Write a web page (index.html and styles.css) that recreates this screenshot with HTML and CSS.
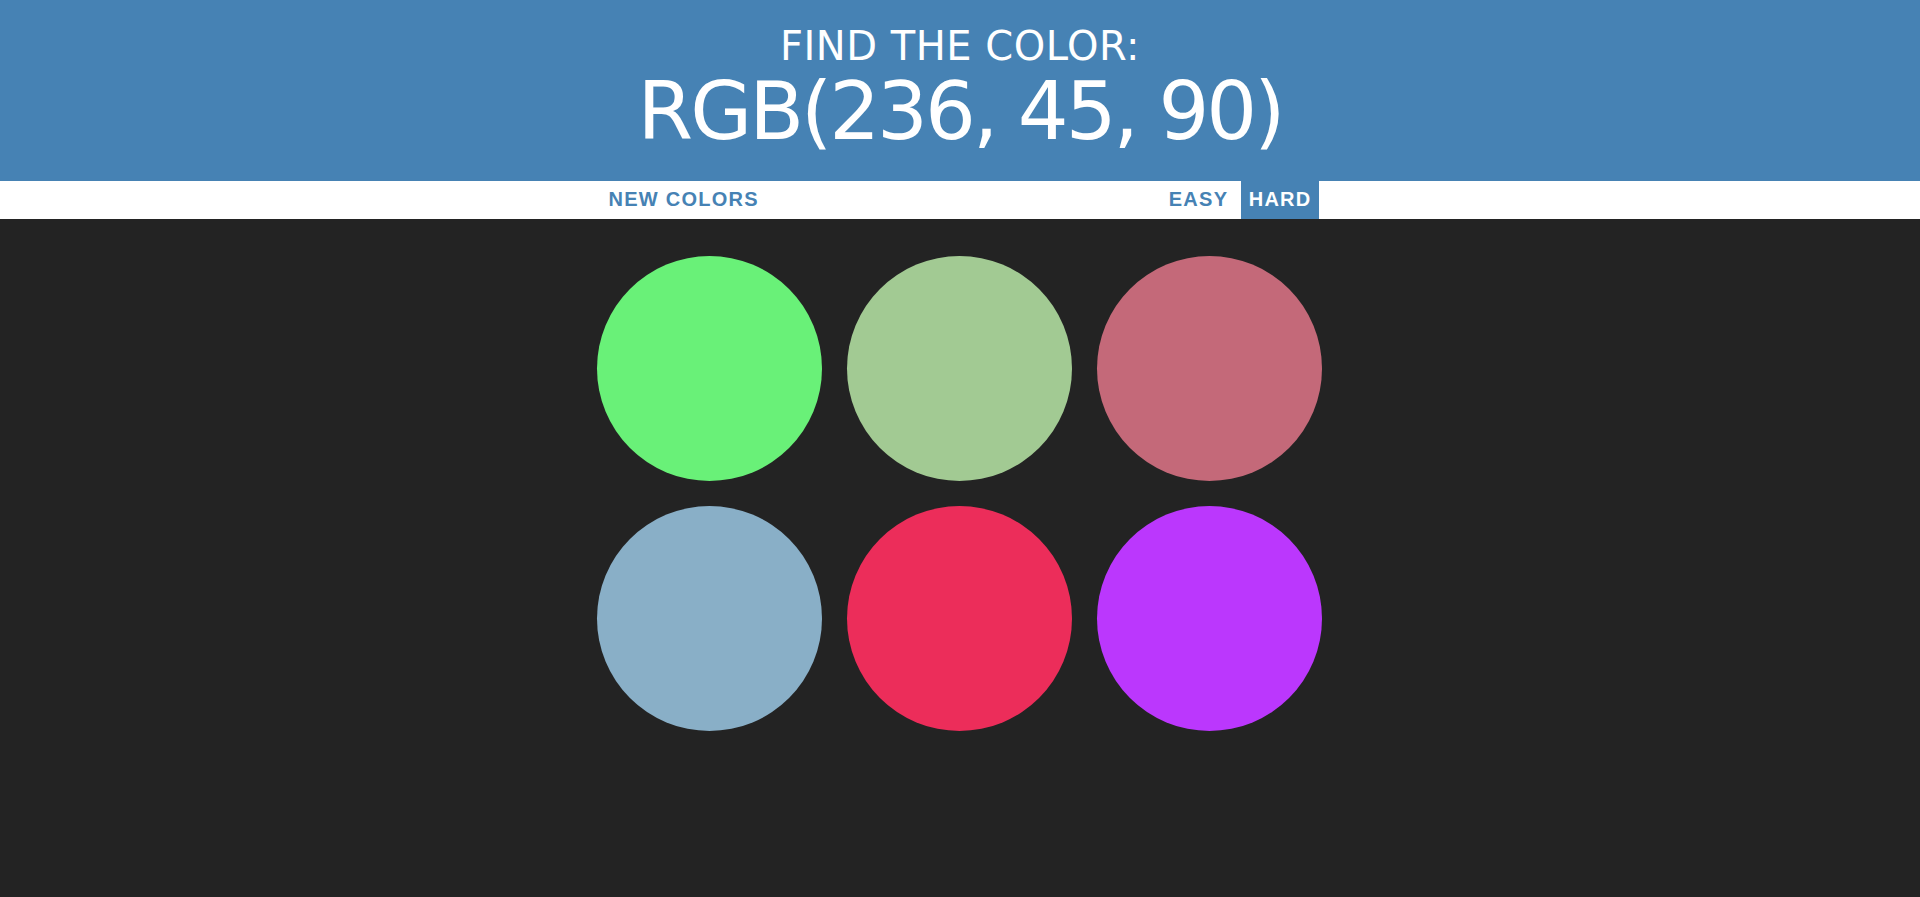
FILE: index.html
```html
<!DOCTYPE html>
<html lang="en">
<head>
<meta charset="utf-8">
<title>Color Game</title>
<link rel="stylesheet" href="styles.css">
</head>
<body>
  <h1 class="title">
    <span class="title-line">Find the color:</span>
    <span class="title-color">RGB(236, 45, 90)</span>
  </h1>
  <div class="stripe">
    <button class="btn">New Colors</button>
    <span class="message"></span>
    <button class="btn">Easy</button>
    <button class="btn selected">Hard</button>
  </div>
  <div class="board">
    <div class="swatch" style="background: rgb(105, 241, 120);"></div>
    <div class="swatch" style="background: rgb(162, 202, 147);"></div>
    <div class="swatch" style="background: rgb(196, 105, 121);"></div>
    <div class="swatch" style="background: rgb(137, 175, 199);"></div>
    <div class="swatch" style="background: rgb(236, 45, 90);"></div>
    <div class="swatch" style="background: rgb(187, 55, 253);"></div>
  </div>
</body>
</html>
```

FILE: styles.css
```css
html, body {
  margin: 0;
  padding: 0;
}

body {
  background: #232323;
  min-height: 897px;
  font-family: "Liberation Sans", Arial, sans-serif;
  font-size: 20px;
}

.title {
  margin: 0;
  padding: 23.5px 0 25.5px;
  background: #4682b4;
  color: #fff;
  text-align: center;
  text-transform: uppercase;
  font-family: "DejaVu Sans", sans-serif;
  font-weight: normal;
}

.title-line {
  display: block;
  font-size: 40px;
  line-height: 44px;
  letter-spacing: 0.5px;
}

.title-color {
  display: block;
  font-size: 80px;
  line-height: 88px;
  letter-spacing: -3px;
}

.stripe {
  height: 38px;
  background: #fff;
  display: flex;
  justify-content: center;
  align-items: stretch;
  gap: 5.5px;
}

.btn {
  border: none;
  background: none;
  margin: 0;
  padding: 0 7.5px 2px;
  height: 100%;
  font-family: "Liberation Sans", Arial, sans-serif;
  font-size: 20px;
  font-weight: 700;
  letter-spacing: 1.25px;
  text-transform: uppercase;
  color: #4682b4;
  outline: none;
  cursor: pointer;
}

.btn.selected {
  background: #4682b4;
  color: #fff;
}

.message {
  display: block;
  width: 384px;
}

.board {
  width: 750px;
  margin: 24px auto 0;
  padding: 12.5px 12.5px 12.5px 12px;
  box-sizing: border-box;
  display: grid;
  grid-template-columns: repeat(3, 225px);
  gap: 25px;
}

.swatch {
  width: 225px;
  height: 225px;
  border-radius: 50%;
}
```
